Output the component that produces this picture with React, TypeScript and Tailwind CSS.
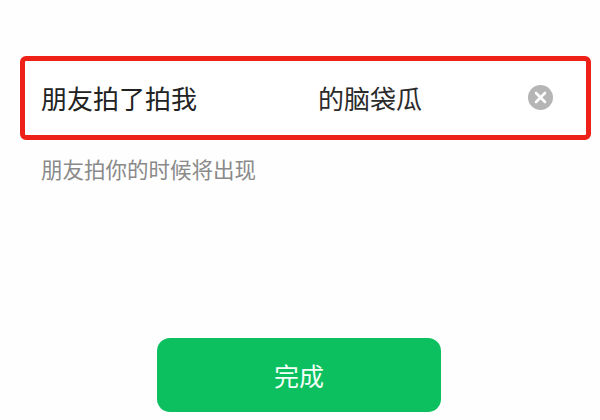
const font = { fontFamily: '"Noto Sans CJK SC", sans-serif' };

export default function App() {
  return (
    <div className="flex h-[420px] w-[600px] flex-col overflow-hidden bg-[#fefefe] pt-[56px]" style={font}>
      <div className="ml-[20px] flex h-[84px] w-[571px] items-center rounded-[6px] border-[5px] border-[#ee2118] bg-white pl-[16px] pr-[33px]">
        <span className="w-[277px] text-[26px] leading-none text-[#222222]">朋友拍了拍我</span>
        <span className="text-[26px] leading-none text-[#2b2b2b]">的脑袋瓜</span>
        <svg className="mb-[2px] ml-auto" width="25" height="25" viewBox="0 0 25 25">
          <circle cx="12.5" cy="12.5" r="12.5" fill="#b5b5b5" />
          <path d="M8 8l9 9M17 8l-9 9" stroke="#ffffff" strokeWidth="2.6" strokeLinecap="round" />
        </svg>
      </div>
      <p className="ml-[41px] mt-[15px] text-[21.5px] leading-[28px] text-[#8a8a8a]">朋友拍你的时候将出现</p>
      <button className="ml-[157px] mt-[155px] flex h-[74px] w-[284px] items-center justify-center rounded-[13px] bg-[#0cc060] pt-[2px] text-[25px] text-[#f4fff8]">
        完成
      </button>
    </div>
  );
}
